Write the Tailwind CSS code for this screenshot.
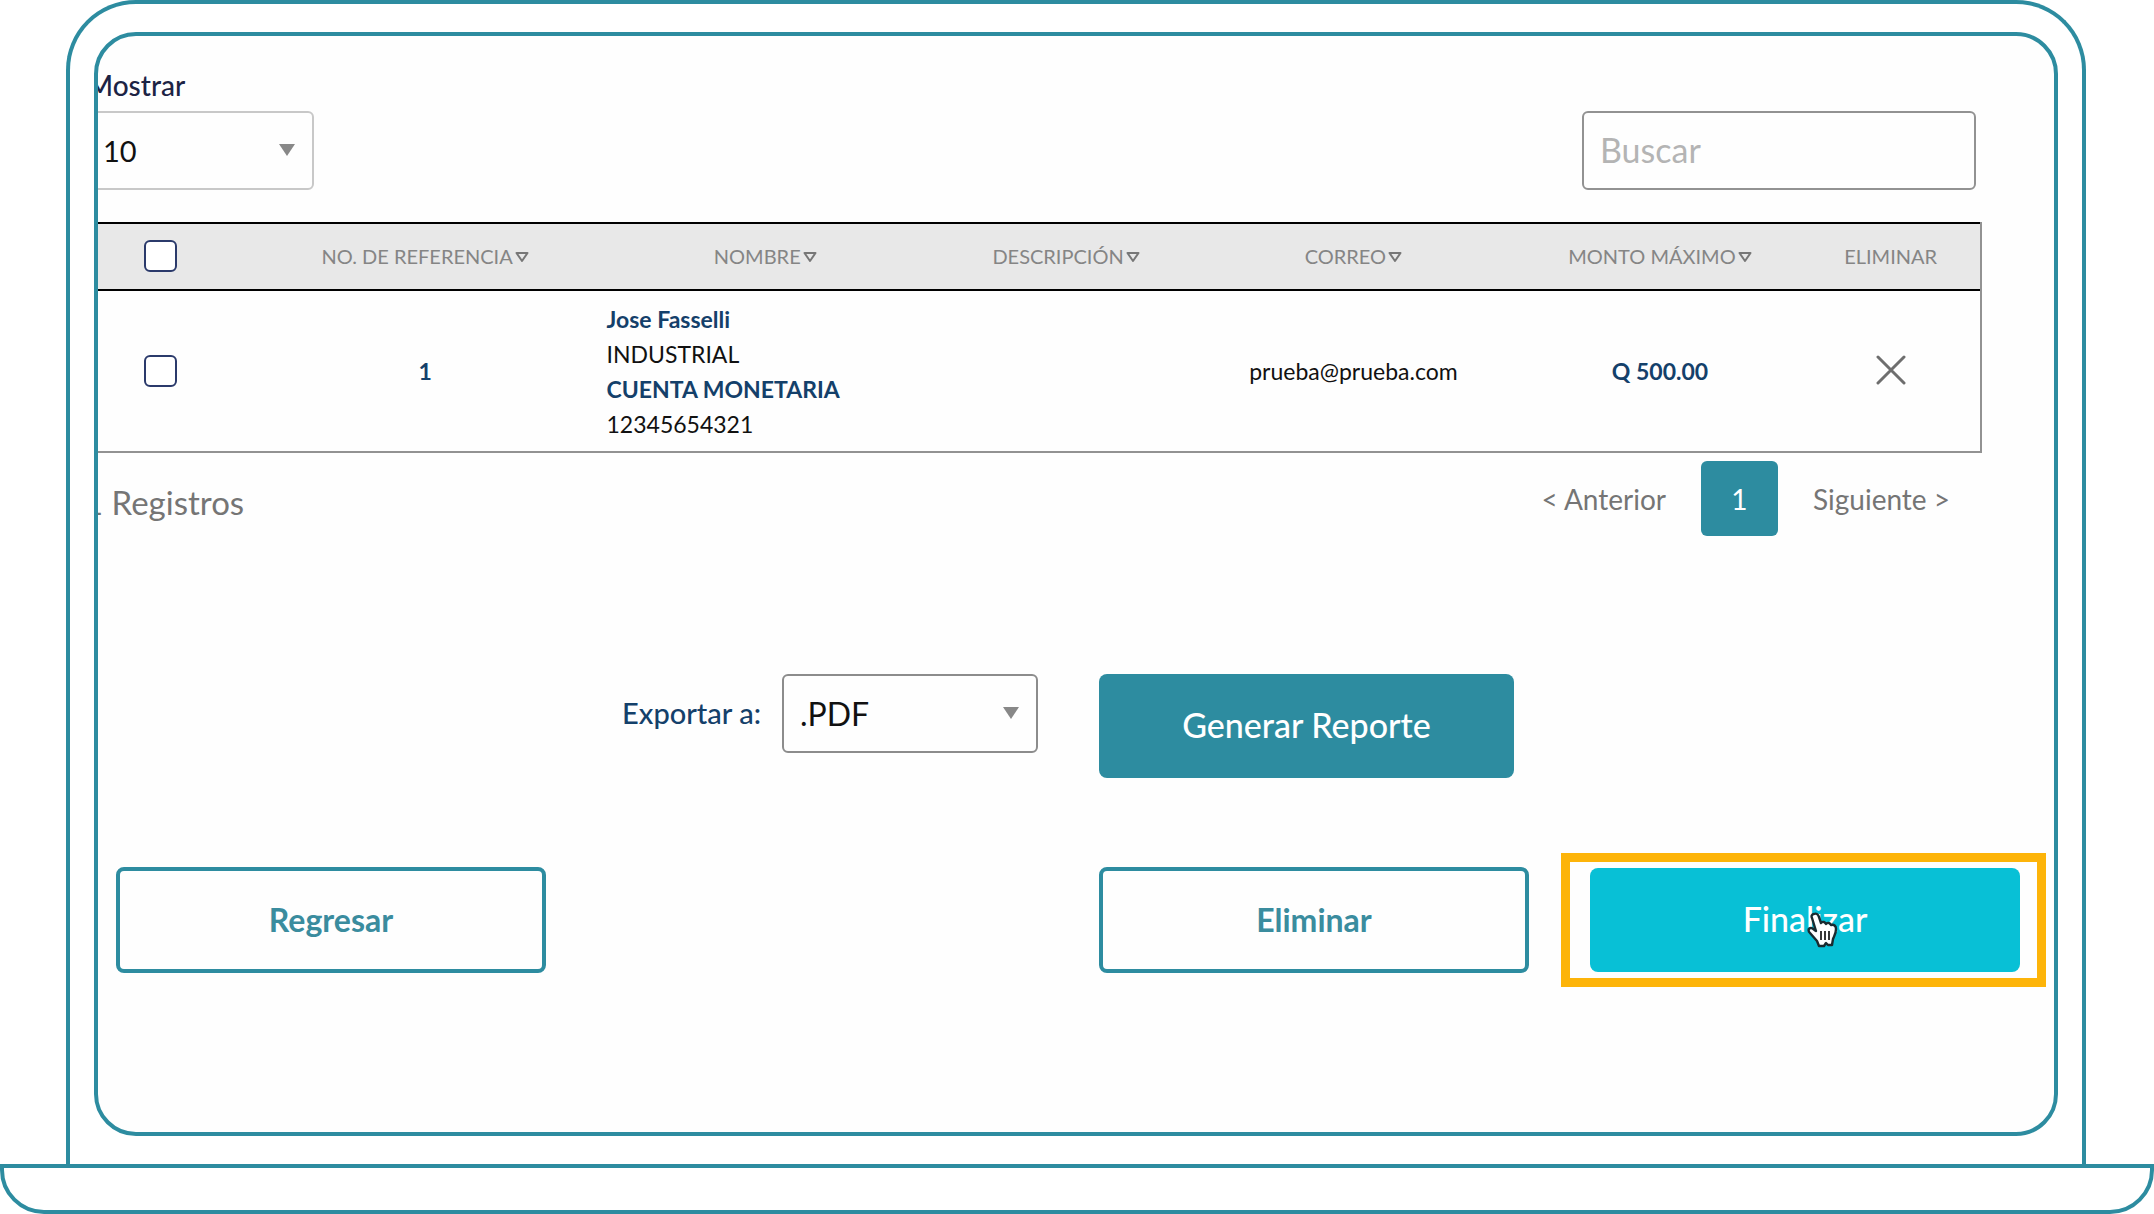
<!DOCTYPE html>
<html lang="es">
<head>
<meta charset="utf-8">
<title>Registros</title>
<script src="https://cdn.jsdelivr.net/npm/@tailwindcss/browser@4"></script>
</head>
<body class="bg-white font-['Lato',sans-serif] text-[#111]">
<div class="mr-[68px] ml-[66px] rounded-t-[70px] border-4 border-b-0 border-[#2d8ca0] px-6 py-7">
  <main class="overflow-hidden rounded-[42px] border-4 border-[#2d8ca0] bg-[#fefefe] pt-[33px] pb-[145px]">

    <div class="-ml-[18px] mr-[78px] flex items-end justify-between">
      <div class="flex flex-col gap-[9px]">
        <label for="mostrar" class="pl-[7px] text-[28px] leading-[33px] font-medium text-[#1c2344]">Mostrar</label>
        <div class="relative w-[234px]">
          <select id="mostrar" class="h-[79px] w-full appearance-none rounded-md border-2 border-[#c8c8c8] bg-transparent pl-[21px] text-[29px]"><option>10</option><option>25</option></select>
          <svg class="pointer-events-none absolute top-[33px] right-[19px] h-3 w-4" viewBox="0 0 16 12"><path d="M0 0H16L8 12Z" fill="#888"/></svg>
        </div>
      </div>
      <input type="search" aria-label="Buscar" placeholder="Buscar" class="h-[79px] w-[394px] rounded-md border-2 border-[#929292] bg-transparent px-4 pb-0.5 text-[34px] placeholder:text-[#b4b4b4]">
    </div>

    <div class="-ml-10 mr-[72px] mt-8">
      <table class="w-full table-fixed border-separate border-spacing-0 border-r-2 border-[#929292]">
        <colgroup><col class="w-[10.7%]"><col class="w-[16.8%]"><col class="w-[18.6%]"><col class="w-[12.7%]"><col class="w-[17.2%]"><col class="w-[14.7%]"><col class="w-[9.3%]"></colgroup>
        <thead>
          <tr class="h-[69px] bg-[#e8e8e8] text-[20px] text-[#858585] *:border-y-2 *:border-black *:p-0 *:pb-0.5 *:font-normal">
            <th><input type="checkbox" aria-label="Seleccionar todos" class="mx-auto block h-8 w-[33px] appearance-none rounded-md border-2 border-[#2b3a6b] bg-white"></th>
            <th>NO. DE REFERENCIA<svg class="ml-0.5 inline-block h-3 w-3.5 align-baseline" viewBox="0 0 14 12"><path d="M1.500 1H12.500L7 9Z" fill="none" stroke="#777" stroke-width="2" stroke-linejoin="round"/></svg></th>
            <th>NOMBRE<svg class="ml-0.5 inline-block h-3 w-3.5 align-baseline" viewBox="0 0 14 12"><path d="M1.500 1H12.500L7 9Z" fill="none" stroke="#777" stroke-width="2" stroke-linejoin="round"/></svg></th>
            <th>DESCRIPCIÓN<svg class="ml-0.5 inline-block h-3 w-3.5 align-baseline" viewBox="0 0 14 12"><path d="M1.500 1H12.500L7 9Z" fill="none" stroke="#777" stroke-width="2" stroke-linejoin="round"/></svg></th>
            <th>CORREO<svg class="ml-0.5 inline-block h-3 w-3.5 align-baseline" viewBox="0 0 14 12"><path d="M1.500 1H12.500L7 9Z" fill="none" stroke="#777" stroke-width="2" stroke-linejoin="round"/></svg></th>
            <th>MONTO MÁXIMO<svg class="ml-0.5 inline-block h-3 w-3.5 align-baseline" viewBox="0 0 14 12"><path d="M1.500 1H12.500L7 9Z" fill="none" stroke="#777" stroke-width="2" stroke-linejoin="round"/></svg></th>
            <th>ELIMINAR</th>
          </tr>
        </thead>
        <tbody>
          <tr class="h-[162px] text-center text-[23px] leading-[35px] *:border-b-2 *:border-[#929292] *:p-0">
            <td><input type="checkbox" aria-label="Seleccionar registro 1" class="mx-auto block h-8 w-[33px] appearance-none rounded-md border-2 border-[#2b3a6b] bg-white"></td>
            <td class="font-bold text-[#14406a]">1</td>
            <td><div class="pt-0.5 pl-5 text-left"><p class="font-bold text-[#14406a]">Jose Fasselli</p><p>INDUSTRIAL</p><p class="font-bold text-[#14406a]">CUENTA MONETARIA</p><p>12345654321</p></div></td>
            <td></td>
            <td>prueba@prueba.com</td>
            <td class="font-bold text-[#14406a]">Q 500.00</td>
            <td><button aria-label="Eliminar registro" class="mx-auto block"><svg class="size-8" viewBox="0 0 32 32"><path d="M3 2L29 28M29 2L3 28" stroke="#6e6e6e" stroke-width="3" stroke-linecap="round"/></svg></button></td>
          </tr>
        </tbody>
      </table>
    </div>

    <div class="-ml-3.5 mr-[104px] mt-2 flex h-[75px] items-center justify-between text-[#757575]">
      <p class="pt-2 text-[33px]">1 Registros</p>
      <nav class="flex items-center gap-[35px] text-[28px]">
        <a href="#">&lt; Anterior</a>
        <a href="#" class="flex h-[75px] w-[77px] items-center justify-center rounded-md bg-[#2d8ca0] text-white">1</a>
        <a href="#">Siguiente &gt;</a>
      </nav>
    </div>

    <div class="mt-[138px] flex items-start justify-center pr-4">
      <label for="formato" class="text-[29px] leading-[78px] font-medium text-[#14406a]">Exportar a:</label>
      <div class="relative ml-[21px] w-[256px]">
        <select id="formato" class="h-[79px] w-full appearance-none rounded-md border-2 border-[#8c8c8c] bg-transparent px-4 text-[32px]"><option>.PDF</option><option>.XLS</option></select>
        <svg class="pointer-events-none absolute top-[33px] right-[19px] h-3 w-4" viewBox="0 0 16 12"><path d="M0 0H16L8 12Z" fill="#888"/></svg>
      </div>
      <button class="ml-[61px] h-[104px] w-[415px] rounded-lg bg-[#2d8ca0] pb-1 text-[34px] font-medium text-white">Generar Reporte</button>
    </div>

    <div class="mt-[75px] flex items-center pr-2 pl-[18px]">
      <button class="h-[106px] w-[430px] rounded-lg border-4 border-[#2d8ca0] text-[32px] font-bold text-[#3a8c9e]">Regresar</button>
      <button class="ml-auto h-[106px] w-[430px] rounded-lg border-4 border-[#2d8ca0] text-[32px] font-bold text-[#3a8c9e]">Eliminar</button>
      <div class="relative ml-8 border-[9px] border-[#fdb409] py-1.5 pr-[17px] pl-5">
        <button class="block h-[104px] w-[430px] rounded-lg bg-[#08c0d6] pb-1 text-[34px] font-medium text-white">Finalizar</button>
        <svg class="pointer-events-none absolute top-[50px] left-[236px] h-9 w-8" viewBox="0 0 32 36"><path d="M8 2C10 1 12 2 13 5L15 11C17 9 19 10 20 12C22 10 24 11 25 13C28 12 30 14 30 17C30 22 28 24 27 27L26 33H22L20 31L18 34H13L11 29L4 21C2 19 2 16 5 16C7 16 8 18 10 19L6 6C5 4 6 2 8 2Z" fill="#fff" stroke="#1a2b30" stroke-width="2.400" stroke-linejoin="round"/><path d="M15 19V28M19 19V28M23 19V28" stroke="#222" stroke-width="1.800"/></svg>
      </div>
    </div>
  </main>
</div>
<div class="h-[50px] rounded-b-[44px] border-4 border-[#2d8ca0]"></div>
</body>
</html>
